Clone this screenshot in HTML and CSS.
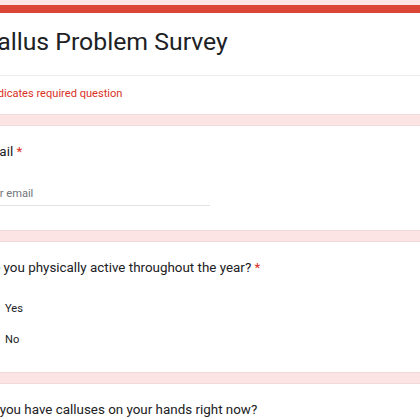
FILE: index.html
```html
<!DOCTYPE html>
<html lang="en">
<head>
<meta charset="utf-8">
<title>Callus Problem Survey</title>
<link rel="stylesheet" href="styles.css">
</head>
<body>
<main class="page">
  <section class="card head">
    <div class="bar"></div>
    <div class="title-sec">
      <h1 class="form-title">Callus Problem Survey</h1>
    </div>
    <div class="req">* Indicates required question</div>
  </section>

  <section class="card q">
    <div class="qt">Email <span class="star">*</span></div>
    <div class="input">Your email</div>
  </section>

  <section class="card q">
    <div class="qt">Are you physically active throughout the year? <span class="star">*</span></div>
    <div class="opts">
      <label class="opt"><span class="radio"></span><span>Yes</span></label>
      <label class="opt"><span class="radio"></span><span>No</span></label>
    </div>
  </section>

  <section class="card q">
    <div class="qt">Do you have calluses on your hands right now?</div>
    <div class="opts">
      <label class="opt"><span class="radio"></span><span>Yes</span></label>
      <label class="opt"><span class="radio"></span><span>No</span></label>
    </div>
  </section>
</main>
</body>
</html>
```

FILE: styles.css
```css
html, body {
  margin: 0;
  padding: 0;
}
body {
  background: #fbe4e3;
  font-family: Roboto, "Liberation Sans", sans-serif;
  color: #202124;
  overflow: hidden;
}
.page {
  width: 512px;
  margin: 5px 0 0 -39px;
  display: flex;
  flex-direction: column;
  gap: 10px;
}
.card {
  background: #fff;
  border: 1px solid #efdbd9;
  border-radius: 7px;
}
.head {
  border-top: none;
  overflow: hidden;
}
.bar {
  height: 8px;
  background: #db4437;
}
.title-sec {
  padding: 13px 19px 17px;
  border-bottom: 1px solid #ececec;
}
.form-title {
  margin: 0;
  font-family: Roboto, "Open Sans", sans-serif;
  font-weight: 400;
  font-size: 24.8px;
  line-height: 32px;
  color: #202124;
}
.req {
  padding: 10px 19px 12px;
  font-size: 11.1px;
  line-height: 16px;
  color: #d93025;
}
.q {
  padding: 16px 19px 24px;
}
.qt {
  font-size: 13.4px;
  line-height: 20px;
  margin-left: -1px;
  color: #202124;
}
.star {
  color: #d93025;
}
.input {
  width: 229px;
  margin-top: 24px;
  padding-bottom: 3px;
  border-bottom: 1px solid #e3e3e3;
  font-size: 11.1px;
  line-height: 16px;
  color: #70757a;
}
.opts {
  margin-top: 15px;
  margin-bottom: -7px;
}
.opt {
  display: flex;
  align-items: center;
  gap: 7px;
  height: 31px;
  font-size: 11.1px;
  line-height: 16px;
  color: #202124;
}
.radio {
  width: 13px;
  height: 13px;
  border: 2px solid #5f6368;
  border-radius: 50%;
  flex: none;
}
```
